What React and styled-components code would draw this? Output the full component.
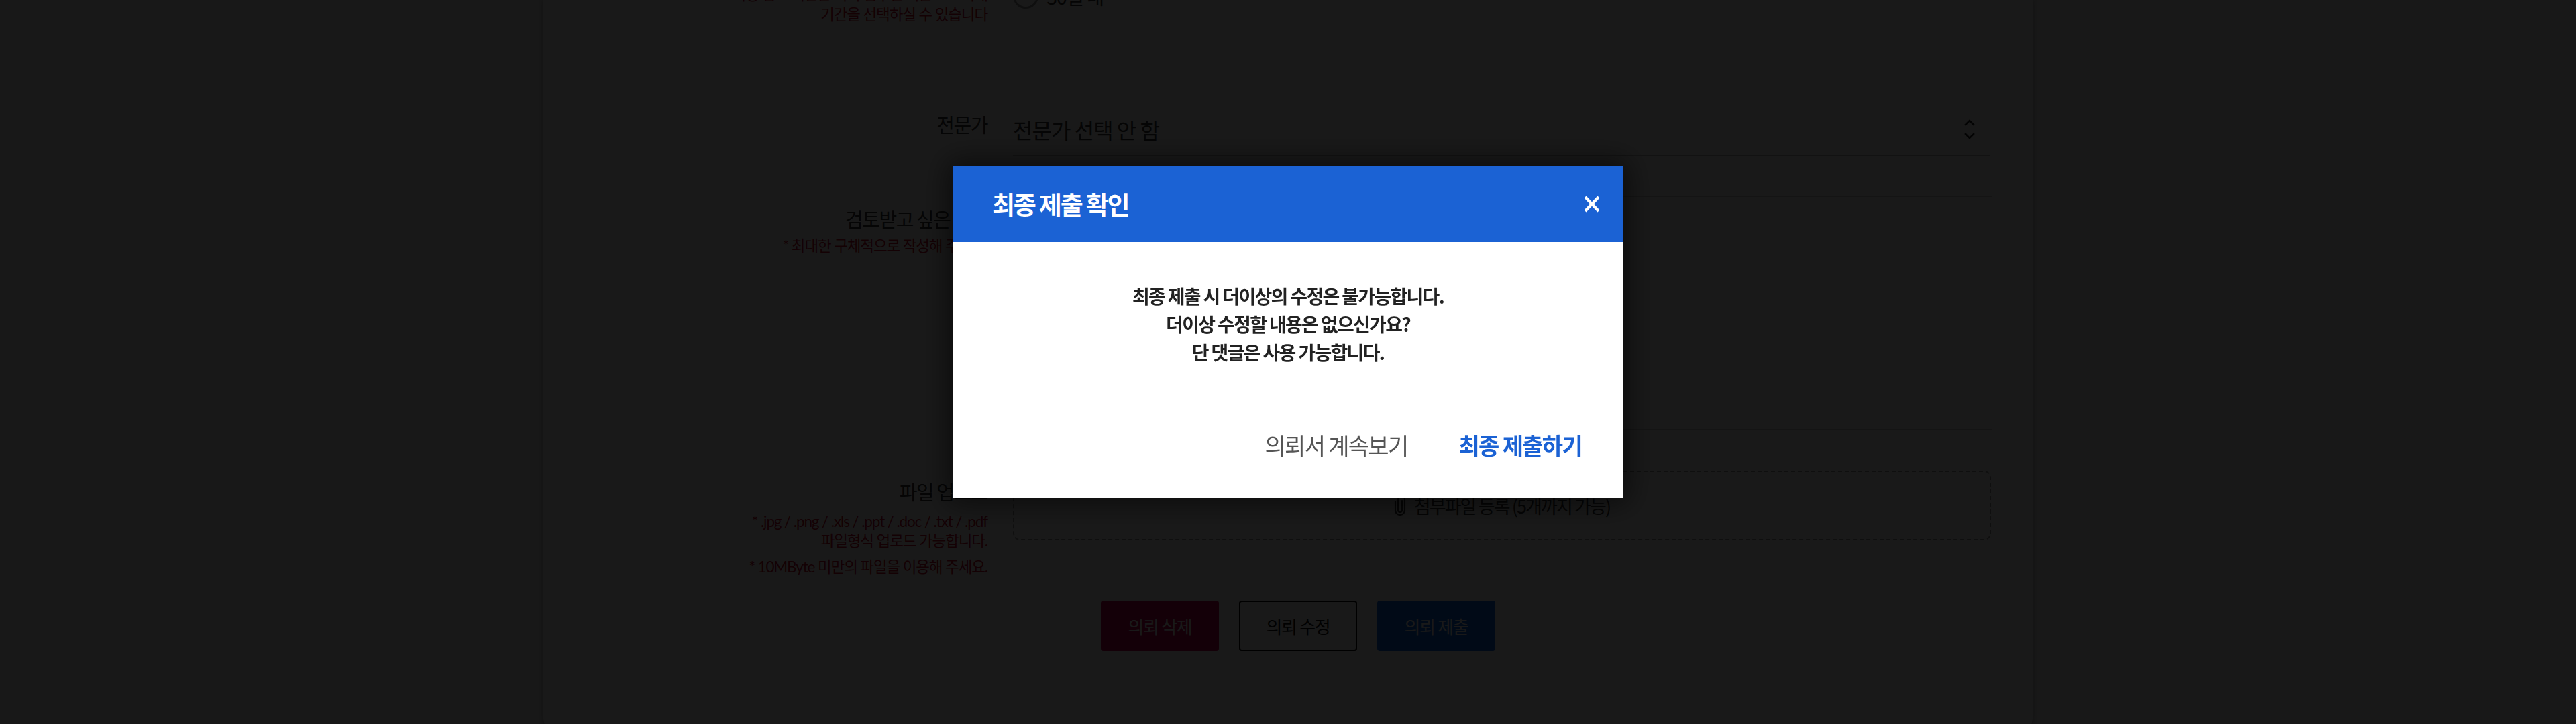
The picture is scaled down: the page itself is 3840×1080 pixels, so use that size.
import React from 'react';
import styled, { createGlobalStyle } from 'styled-components';

const GlobalStyle = createGlobalStyle`
  html, body { margin: 0; padding: 0; }
  body {
    background: #f0f0f0;
    font-family: "Noto Sans CJK KR", "Noto Sans", sans-serif;
    overflow: hidden;
  }
  * { box-sizing: border-box; }
`;

const Page = styled.div`
  height: 1080px;
  overflow: hidden;
  position: relative;
`;

const Panel = styled.main`
  width: 2220px;
  min-height: 1100px;
  margin: 0 auto;
  background: #fff;
  border-radius: 0 0 30px 30px;
  box-shadow: 0 0 8px rgba(0, 0, 0, 0.35);
  padding: 0 60px 0 0;
  display: flow-root;
`;

const Form = styled.div`
  margin-top: -23px;
  display: flex;
  flex-direction: column;
`;

const Row = styled.section`
  display: grid;
  grid-template-columns: 662px 1460px;
  column-gap: 38px;
  margin-top: ${(p) => p.$gap || 0}px;
`;

const LabelCell = styled.div`
  text-align: right;
  padding-top: ${(p) => p.$pad || 0}px;
`;

const Label = styled.div`
  font-size: 29px;
  line-height: 36px;
  color: #333;
  letter-spacing: -0.05em;
`;

const Note = styled.p`
  margin: ${(p) => p.$mt || 0}px 0 0;
  color: #c8102e;
  font-family: Lato, "Noto Sans CJK KR", sans-serif;
  font-size: 22.5px;
  line-height: ${(p) => p.$lh || 30}px;
  letter-spacing: -0.05em;
  white-space: nowrap;
`;

const RadioGroup = styled.div`
  display: flex;
  align-items: center;
  gap: 12px;
  margin-top: -2px;
  height: 38px;
`;

const RadioCircle = styled.span`
  width: 38px;
  height: 38px;
  border-radius: 50%;
  border: 3px solid #999;
  background: #fff;
`;

const RadioText = styled.span`
  font-size: 29px;
  color: #333;
  letter-spacing: -0.05em;
`;

const Select = styled.div`
  height: 77px;
  border-bottom: 1px solid #bbb;
  display: flex;
  align-items: center;
  justify-content: space-between;
  padding: 0 22px 0 0;
  margin-right: 4px;
  font-size: 32px;
  color: #333;
  letter-spacing: -0.03em;
`;

const TextArea = styled.div`
  height: 348px;
  border: 1px solid #ccc;
`;

const DropZone = styled.div`
  height: 104px;
  border: 2px dashed #9a9a9a;
  border-radius: 10px;
  margin-right: 2px;
  display: flex;
  align-items: center;
  justify-content: center;
  gap: 12px;
  font-size: 27px;
  color: #333;
  letter-spacing: -0.07em;
`;

const ActionBar = styled.div`
  display: flex;
  justify-content: center;
  gap: 30px;
  margin-top: 36px;
  padding-left: 90px;
`;

const ActionButton = styled.button`
  width: 176px;
  height: 75px;
  border-radius: 4px;
  font-family: "Noto Sans CJK KR", sans-serif;
  font-size: 26px;
  letter-spacing: -0.05em;
  cursor: pointer;
  border: ${(p) => (p.$variant === 'outline' ? '2px solid #000' : 'none')};
  background: ${(p) =>
    p.$variant === 'danger' ? '#c80050' : p.$variant === 'primary' ? '#0a64e6' : '#fff'};
  color: ${(p) => (p.$variant === 'outline' ? '#111' : '#fff')};
`;

const Overlay = styled.div`
  position: fixed;
  inset: 0;
  background: rgba(0, 0, 0, 0.9);
  z-index: 10;
`;

const Modal = styled.div`
  position: fixed;
  top: 247px;
  left: 50%;
  transform: translateX(-50%);
  width: 1000px;
  background: #fff;
  z-index: 11;
  box-shadow: 0 0 40px 8px rgba(0, 0, 0, 0.55);
`;

const ModalHeader = styled.header`
  height: 114px;
  background: #1b62d4;
  display: flex;
  align-items: center;
  justify-content: space-between;
  padding: 0 35px 0 59px;
`;

const ModalTitle = styled.h2`
  margin: 0;
  color: #fff;
  font-size: 37px;
  font-weight: 700;
  letter-spacing: -0.06em;
`;

const CloseButton = styled.button`
  width: 24px;
  height: 25px;
  padding: 0;
  border: none;
  background: transparent;
  display: flex;
  cursor: pointer;
`;

const ModalBody = styled.div`
  padding: 59px 40px 0;
  text-align: center;
  color: #222;
  font-size: 28px;
  font-weight: 700;
  line-height: 42px;
  letter-spacing: -0.06em;
`;

const ModalFooter = styled.footer`
  display: flex;
  justify-content: flex-end;
  align-items: center;
  gap: 76px;
  height: 60px;
  margin-top: 87px;
  padding: 0 62px 0 0;
  margin-bottom: 50px;
`;

const TextButton = styled.button`
  border: none;
  background: transparent;
  padding: 0;
  font-family: "Noto Sans CJK KR", sans-serif;
  font-size: 34px;
  letter-spacing: -0.05em;
  cursor: pointer;
  font-weight: ${(p) => (p.$primary ? 700 : 400)};
  color: ${(p) => (p.$primary ? '#1b62d4' : '#555')};
`;

const Arrows = () => (
  <svg width="16" height="32" viewBox="0 0 16 32" fill="none" stroke="#222" strokeWidth="2.6" strokeLinecap="square">
    <polyline points="2,9 8,3 14,9" />
    <polyline points="2,23 8,29 14,23" />
  </svg>
);

const Paperclip = () => (
  <svg width="18" height="30" viewBox="0 0 18 30" fill="none" stroke="#333" strokeWidth="2.2" strokeLinecap="round">
    <path d="M12 8 V22 a3 3 0 0 1 -6 0 V6 a5 5 0 0 1 10 0 V22 a7 7 0 0 1 -14 0 V9" />
  </svg>
);

const CloseIcon = () => (
  <svg width="24" height="25" viewBox="0 0 24 25" fill="none" stroke="#fff" strokeWidth="4.4" strokeLinecap="butt">
    <line x1="2" y1="2" x2="22" y2="23" />
    <line x1="22" y1="2" x2="2" y2="23" />
  </svg>
);

export default function App() {
  return (
    <Page>
      <GlobalStyle />
      <Panel>
        <Form>
          <Row>
            <LabelCell>
              <Note>* 희망 검토 기간은 의뢰 접수일 기준으로 최대</Note>
              <Note>기간을 선택하실 수 있습니다</Note>
            </LabelCell>
            <RadioGroup>
              <RadioCircle />
              <RadioText>30일 내</RadioText>
            </RadioGroup>
          </Row>

          <Row $gap={118}>
            <LabelCell $pad={12}>
              <Label>전문가</Label>
            </LabelCell>
            <Select>
              <span>전문가 선택 안 함</span>
              <Arrows />
            </Select>
          </Row>

          <Row $gap={61}>
            <LabelCell $pad={15}>
              <Label>검토받고 싶은 내용</Label>
              <Note $mt={8}>* 최대한 구체적으로 작성해 주세요.</Note>
            </LabelCell>
            <TextArea />
          </Row>

          <Row $gap={61}>
            <LabelCell $pad={13}>
              <Label>파일 업로드</Label>
              <Note $mt={12} $lh={29}>* .jpg / .png / .xls / .ppt / .doc / .txt / .pdf</Note>
              <Note $lh={29}>파일형식 업로드 가능합니다.</Note>
              <Note $mt={10} $lh={29}>* 10MByte 미만의 파일을 이용해 주세요.</Note>
            </LabelCell>
            <DropZone>
              <Paperclip />
              <span>첨부파일 등록 (5개까지 가능)</span>
            </DropZone>
          </Row>

          <ActionBar>
            <ActionButton $variant="danger">의뢰 삭제</ActionButton>
            <ActionButton $variant="outline">의뢰 수정</ActionButton>
            <ActionButton $variant="primary">의뢰 제출</ActionButton>
          </ActionBar>
        </Form>
      </Panel>

      <Overlay />
      <Modal role="dialog" aria-modal="true">
        <ModalHeader>
          <ModalTitle>최종 제출 확인</ModalTitle>
          <CloseButton aria-label="닫기">
            <CloseIcon />
          </CloseButton>
        </ModalHeader>
        <ModalBody>
          최종 제출 시 더이상의 수정은 불가능합니다.
          <br />
          더이상 수정할 내용은 없으신가요?
          <br />
          단 댓글은 사용 가능합니다.
        </ModalBody>
        <ModalFooter>
          <TextButton>의뢰서 계속보기</TextButton>
          <TextButton $primary>최종 제출하기</TextButton>
        </ModalFooter>
      </Modal>
    </Page>
  );
}
